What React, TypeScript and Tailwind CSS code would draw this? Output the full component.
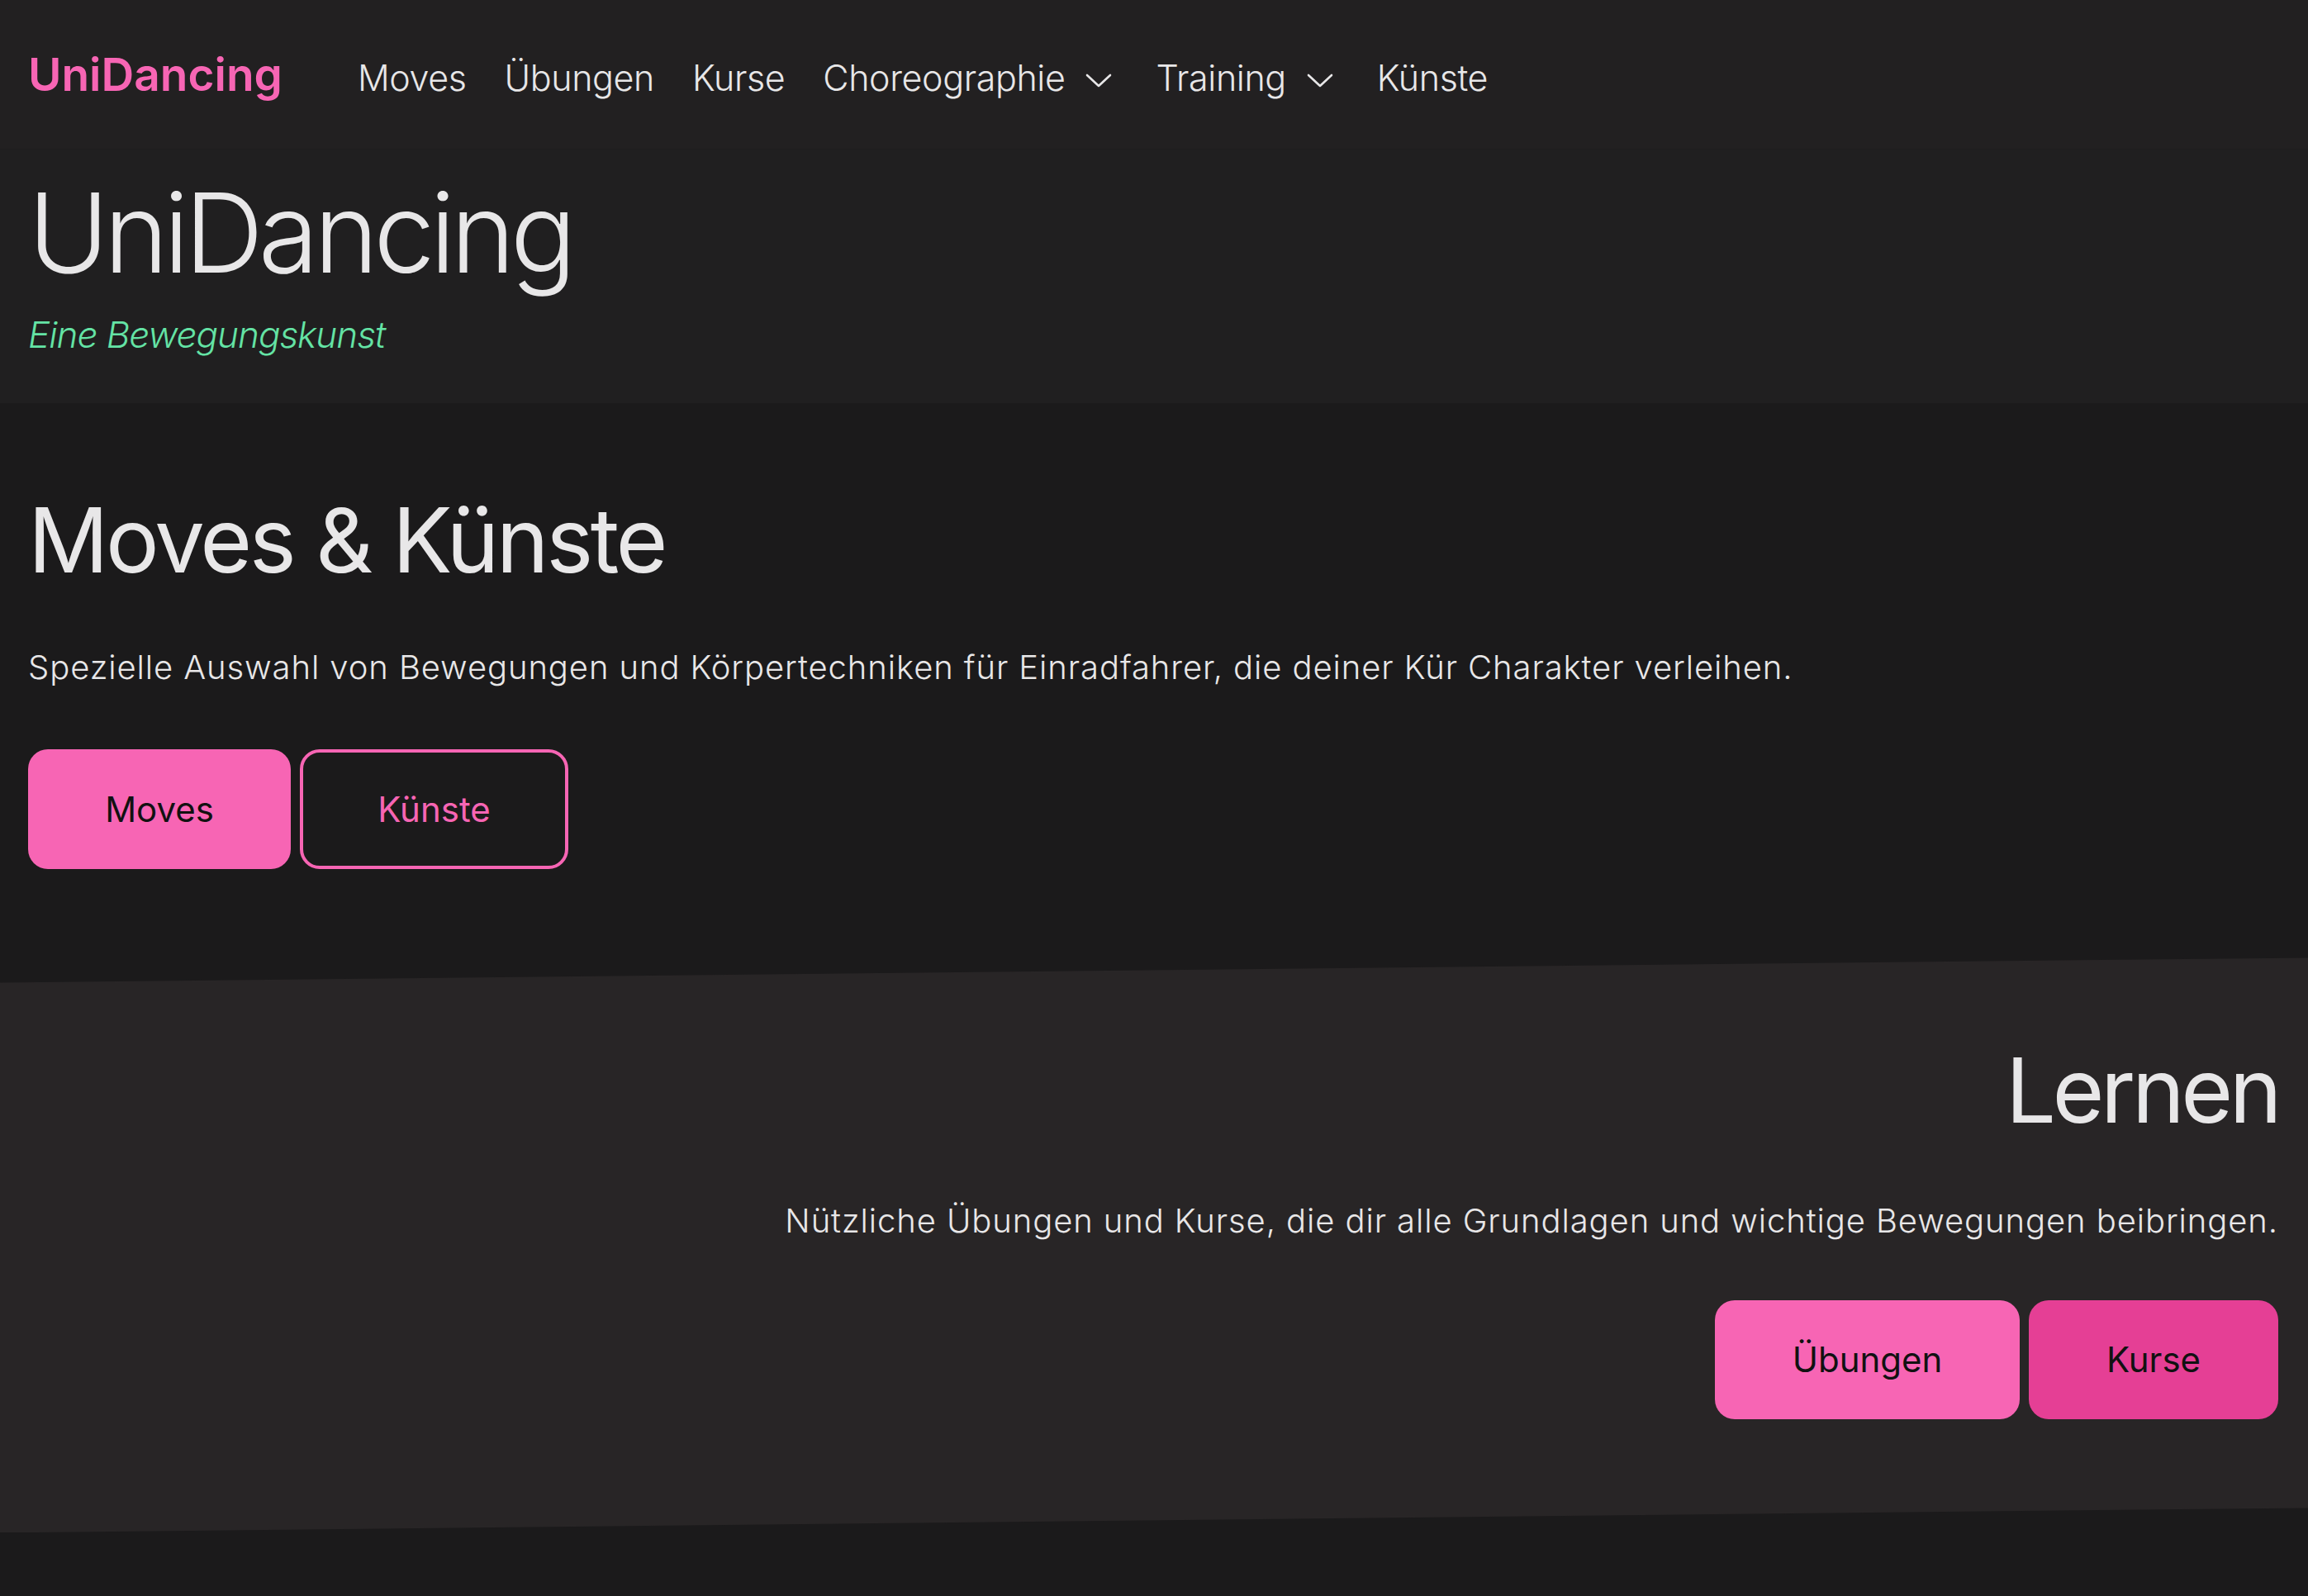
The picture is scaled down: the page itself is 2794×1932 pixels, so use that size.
import React from "react";

const ChevronDown = () => (
  <svg width="34" height="20" viewBox="0 0 34 20" fill="none" stroke="#e8e7e8" strokeWidth="2.6" strokeLinecap="round" strokeLinejoin="round" className="ml-[24px] mr-[6px] self-center mt-[4px]">
    <path d="M3 4 L17 17 L31 4" />
  </svg>
);

export default function App() {
  const font = { fontFamily: "Inter, 'Noto Sans', sans-serif" };
  return (
    <div style={font} className="min-h-[1932px] bg-[#1b1a1b] text-[#e8e7e8]">
      <nav className="h-[181px] flex items-center px-[34px] bg-[#222021] border-b border-[#1e1d1e]">
        <div className="flex items-baseline">
          <span className="text-[55px] leading-[1.2] font-semibold text-[#f765b4] tracking-[0px]">UniDancing</span>
          <div className="flex items-baseline ml-[91px] gap-[46px] text-[43px] leading-[1.2] font-light tracking-[-0.4px]">
            <a>Moves</a>
            <a>Übungen</a>
            <a>Kurse</a>
            <a className="flex items-baseline">Choreographie<ChevronDown /></a>
            <a className="flex items-baseline">Training<ChevronDown /></a>
            <a>Künste</a>
          </div>
        </div>
      </nav>

      <header className="bg-[#201f20] px-[34px] pt-[21px] pb-[57px]">
        <h1 className="text-[133px] leading-[1.2] font-light tracking-[-6px]">UniDancing</h1>
        <p className="mt-[17px] text-[44px] leading-[1.2] italic font-light text-[#64e3a5] tracking-[-1px]">Eine Bewegungskunst</p>
      </header>

      <section className="px-[34px] pt-[101px] h-[671px]">
        <h2 className="text-[108px] leading-[1.2] font-normal tracking-[-3.5px]">Moves &amp; Künste</h2>
        <p className="mt-[65px] text-[40px] leading-[1.2] font-light tracking-[0.9px]">
          Spezielle Auswahl von Bewegungen und Körpertechniken für Einradfahrer, die deiner Kür Charakter verleihen.
        </p>
        <div className="mt-[75px] flex gap-[11px]">
          <button className="h-[145px] w-[318px] rounded-[24px] bg-[#f765b4] text-[#111] text-[42px] font-normal">Moves</button>
          <button className="h-[145px] w-[325px] rounded-[24px] border-[4px] border-[#f765b4] text-[#f765b4] text-[42px] font-normal">Künste</button>
        </div>
      </section>

      <section className="h-[696px] bg-[#282526] [clip-path:polygon(0_30px,100%_0,100%_calc(100%-30px),0_100%)] px-[36px] pt-[96px] flex flex-col items-end text-right">
        <h2 className="text-[108px] leading-[1.2] font-normal tracking-[-4.5px]">Lernen</h2>
        <p className="mt-[69px] text-[40px] leading-[1.2] font-light tracking-[0.9px]">
          Nützliche Übungen und Kurse, die dir alle Grundlagen und wichtige Bewegungen beibringen.
        </p>
        <div className="mt-[72px] flex gap-[11px]">
          <button className="h-[144px] w-[369px] rounded-[24px] bg-[#f765b4] text-[#111] text-[42px] font-normal">Übungen</button>
          <button className="h-[144px] w-[302px] rounded-[24px] bg-[#e53f95] text-[#111] text-[42px] font-normal">Kurse</button>
        </div>
      </section>
    </div>
  );
}
